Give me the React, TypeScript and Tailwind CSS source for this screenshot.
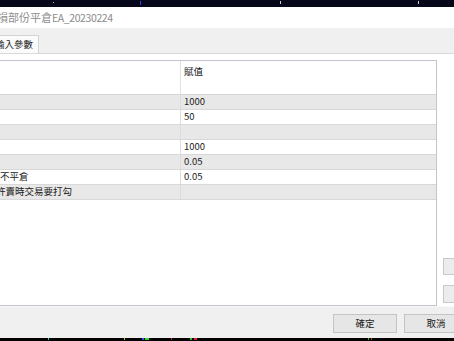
import React from "react";

const rows: { label: React.ReactNode; value: string }[] = [
  { label: "", value: "1000" },
  { label: "", value: "50" },
  { label: "", value: "" },
  { label: "", value: "1000" },
  { label: "", value: "0.05" },
  { label: <span>不平倉</span>, value: "0.05" },
  { label: <span className="-ml-[4px]">許賣時交易要打勾</span>, value: "" },
];

export default function App() {
  return (
    <div className="relative w-[454px] h-[341px] overflow-hidden bg-[#f0f0f0] font-['Noto_Sans_CJK_TC','Noto_Sans',sans-serif] text-[#1a1a1a] flex flex-col">
      {/* top dark strip */}
      <div className="relative h-[7px] bg-[#07071a] shrink-0">
        <span className="absolute left-[140px] top-[1px] w-[1px] h-[4px] bg-[#3b3bff]" />
        <span className="absolute left-[53px] top-[2px] w-[1px] h-[1px] bg-[#aaaaaa]" />
        <span className="absolute left-[280px] top-[1px] w-[1px] h-[3px] bg-[#cccccc]" />
        <span className="absolute left-[418px] top-[1px] w-[1px] h-[3px] bg-[#cccccc]" />
      </div>
      {/* title bar */}
      <div className="h-[21px] bg-white flex items-center shrink-0 overflow-hidden">
        <span className="-ml-[3px] text-[11px] leading-none text-[#8c8c8c] whitespace-nowrap">
          損部份平倉<span className="text-[10.5px] tracking-[-0.4px]">EA_20230224</span>
        </span>
      </div>
      {/* tab strip */}
      <div className="h-[25px] flex items-end shrink-0 overflow-hidden">
        <div className="h-[18px] w-[39px] bg-[#fbfbfb] border-r border-t border-[#d4d4d4] flex items-center overflow-hidden">
          <span className="-ml-[5px] text-[9.5px] leading-none whitespace-nowrap text-[#222]">輸入參數</span>
        </div>
      </div>
      {/* tab page */}
      <div className="h-[253px] bg-white border-t border-[#d9d9d9] flex shrink-0 overflow-hidden">
        <div className="mt-[6px] -ml-[2px] w-[439px] h-[246px] border border-[#c3c3cd] flex flex-col shrink-0">
          <div className="h-[34px] flex border-b border-[#d6d6d6] shrink-0">
            <div className="w-[182px] border-r border-[#e2e2e2]" />
            <div className="pl-[3px] pt-[4px] text-[9.5px] leading-[12px]">賦值</div>
          </div>
          {rows.map((r, i) => (
            <div
              key={i}
              className={`h-[15px] flex border-b border-[#d8d8d8] shrink-0 ${i % 2 === 0 ? "bg-[#e8e8e8]" : "bg-white"}`}
            >
              <div className="w-[182px] border-r border-[#dcdcdc] flex items-center pl-[1px] text-[9.5px] leading-none whitespace-nowrap overflow-hidden">
                {r.label}
              </div>
              <div className="flex items-center pl-[3px] text-[9.5px] leading-none">{r.value}</div>
            </div>
          ))}
          <div className="flex-1" />
        </div>
        <div className="ml-[6px] pt-[204px] flex flex-col gap-[10px]">
          <div className="w-[20px] h-[17px] bg-[#ececec] border border-[#c8c8c8]" />
          <div className="w-[20px] h-[18px] bg-[#ececec] border border-[#c8c8c8]" />
        </div>
      </div>
      {/* bottom buttons */}
      <div className="h-[32px] flex items-start pt-[7px] shrink-0 overflow-hidden border-t border-[#f8f8f8]">
        <div className="ml-[333px] w-[64px] h-[19px] bg-[#e6e6e6] border border-[#c4c4c4] flex items-center justify-center text-[9.5px] leading-none shrink-0">
          確定
        </div>
        <div className="ml-[7px] w-[64px] h-[19px] bg-[#e6e6e6] border border-[#c4c4c4] flex items-center justify-center text-[9.5px] leading-none shrink-0">
          取消
        </div>
      </div>
      {/* bottom strip */}
      <div className="relative h-[3px] bg-black shrink-0">
        <span className="absolute left-[48px] top-0 w-[1px] h-[2px] bg-[#2ec4c4]" />
        <span className="absolute left-[124px] top-0 w-[1px] h-[2px] bg-[#d8c020]" />
        <span className="absolute left-[142px] top-0 w-[2px] h-[2px] bg-[#3050ff]" />
        <span className="absolute left-[145px] top-0 w-[4px] h-[2px] bg-[#20e020]" />
        <span className="absolute left-[171px] top-0 w-[1px] h-[2px] bg-[#e02020]" />
        <span className="absolute left-[190px] top-0 w-[2px] h-[2px] bg-[#20c020]" />
        <span className="absolute left-[194px] top-0 w-[3px] h-[2px] bg-[#e02020]" />
        <span className="absolute left-[368px] top-0 w-[1px] h-[2px] bg-[#20c020]" />
        <span className="absolute left-[371px] top-0 w-[1px] h-[2px] bg-[#e02020]" />
      </div>
    </div>
  );
}
